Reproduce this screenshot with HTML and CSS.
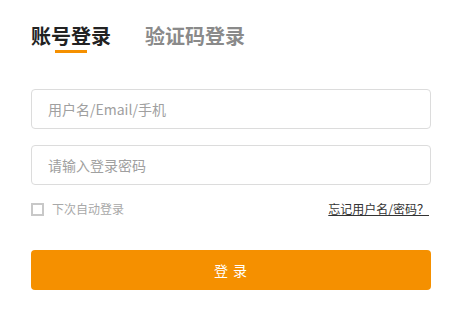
FILE: index.html
```html
<!DOCTYPE html>
<html lang="zh">
<head>
<meta charset="utf-8">
<link rel="stylesheet" href="styles.css">
</head>
<body>
<div class="login">
  <div class="tabs">
    <div class="tab active"><span class="tab-label">账号登录</span><span class="tab-bar"></span></div>
    <div class="tab"><span class="tab-label">验证码登录</span></div>
  </div>
  <form class="form">
    <input class="field" type="text" placeholder="用户名/Email/手机">
    <input class="field" type="password" placeholder="请输入登录密码">
    <div class="options">
      <label class="remember"><span class="box"></span>下次自动登录</label>
      <a class="forgot" href="#">忘记用户名/密码？</a>
    </div>
    <button class="submit" type="button">登 录</button>
  </form>
</div>
</body>
</html>
```
FILE: styles.css
```css
html, body {
  margin: 0;
  padding: 0;
  background: #fff;
}
body {
  font-family: "Noto Sans CJK SC", "Noto Sans", sans-serif;
}
.login {
  width: 400px;
  margin-left: 31px;
  padding-top: 22px;
}
.tabs {
  display: flex;
  gap: 34px;
  height: 32px;
}
.tab {
  display: flex;
  flex-direction: column;
  align-items: center;
}
.tab-label {
  font-size: 20px;
  line-height: 28px;
  font-weight: 700;
  color: #8a8a8a;
}
.tab.active .tab-label {
  color: #222;
}
.tab-bar {
  display: block;
  width: 32px;
  height: 3px;
  background: #f59000;
}
.form {
  display: flex;
  flex-direction: column;
  gap: 16px;
  margin-top: 35px;
}
.field {
  box-sizing: border-box;
  width: 400px;
  height: 40px;
  margin: 0;
  padding: 0 16px;
  border: 1px solid #dcdcdc;
  border-radius: 4px;
  font-family: inherit;
  font-size: 14px;
  color: #333;
  outline: none;
}
.field::placeholder {
  color: #a0a0a0;
}
.options {
  display: flex;
  justify-content: space-between;
  align-items: center;
  height: 18px;
  margin-top: -1px;
  font-size: 12px;
  line-height: 18px;
}
.remember {
  display: flex;
  align-items: center;
  color: #a8a8a8;
}
.box {
  box-sizing: border-box;
  width: 13px;
  height: 13px;
  border: 2px solid #c8c8c8;
  margin-right: 8px;
}
.forgot {
  color: #333;
  text-decoration: underline;
  margin-right: 2px;
}
.submit {
  margin-top: 16px;
  height: 40px;
  border: none;
  border-radius: 4px;
  background: #f59000;
  color: #fff;
  font-family: inherit;
  font-size: 14px;
  letter-spacing: 1px;
}
```
